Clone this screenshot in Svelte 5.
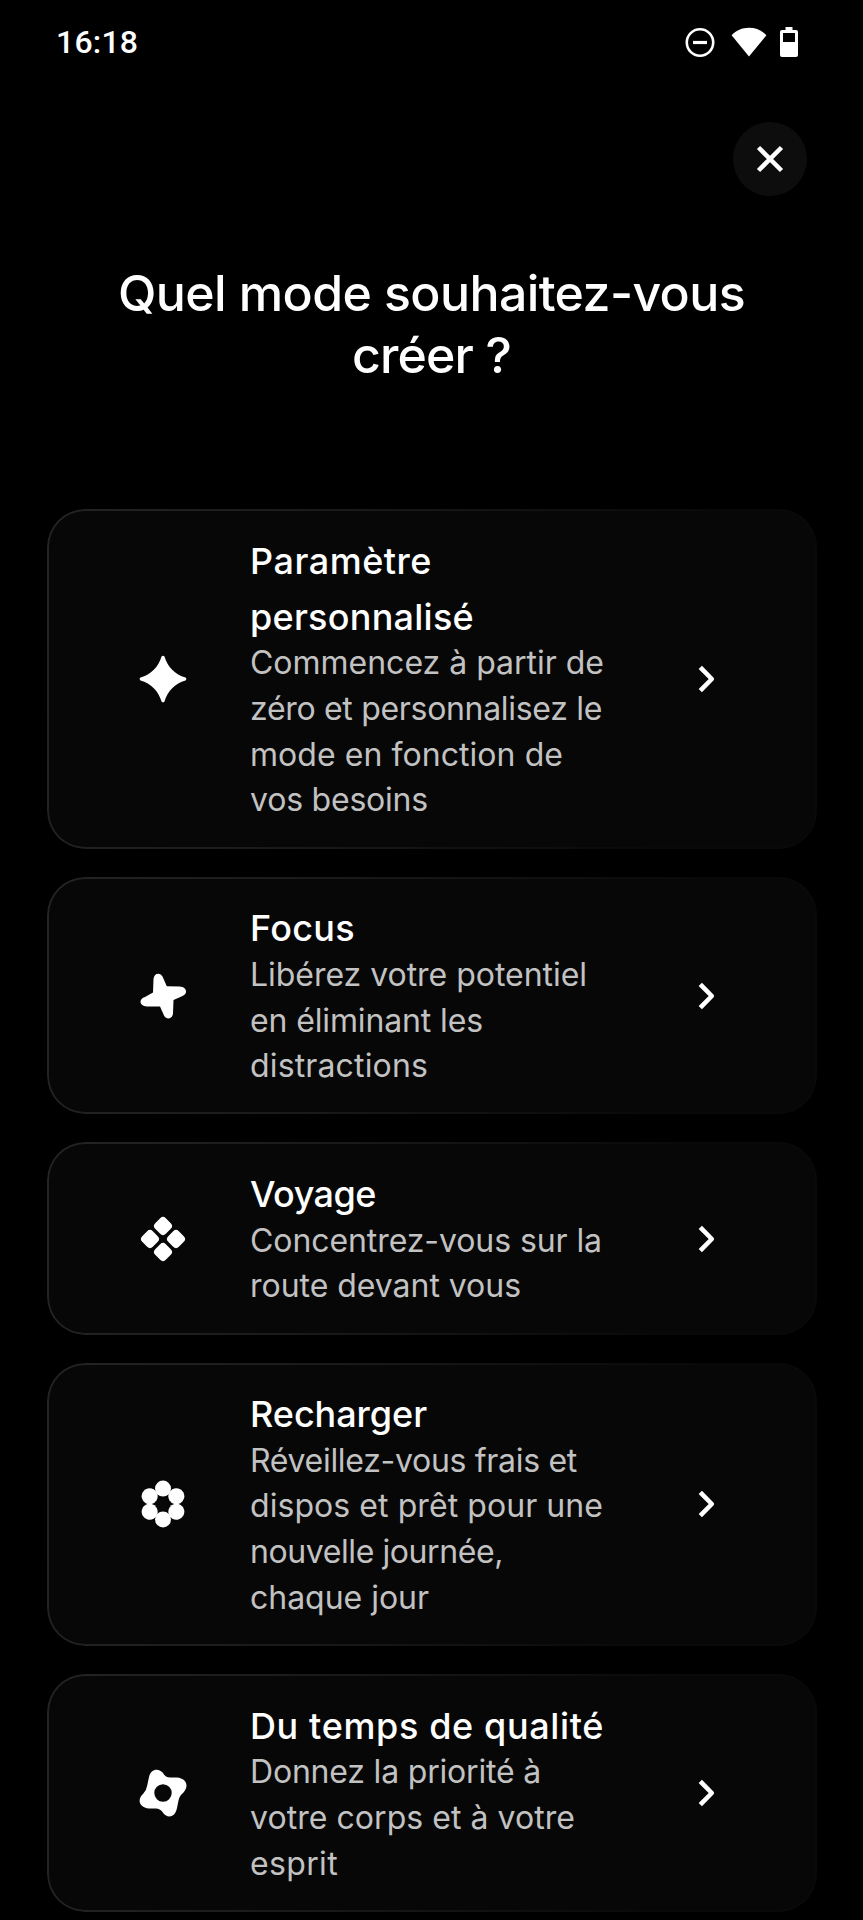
<script lang="ts">
  type Line = { text: string; width: number };
  type Mode = { icon: string; title: Line[]; description: Line[] };

  const heading: Line[] = [
    { text: 'Quel mode souhaitez-vous', width: 627 },
    { text: 'créer ?', width: 159 },
  ];

  const modes: Mode[] = [
    {
      icon: 'sparkle',
      title: [
        { text: 'Paramètre', width: 182 },
        { text: 'personnalisé', width: 224 },
      ],
      description: [
        { text: 'Commencez à partir de', width: 354 },
        { text: 'zéro et personnalisez le', width: 352 },
        { text: 'mode en fonction de', width: 313 },
        { text: 'vos besoins', width: 178 },
      ],
    },
    {
      icon: 'star',
      title: [{ text: 'Focus', width: 105 }],
      description: [
        { text: 'Libérez votre potentiel', width: 337 },
        { text: 'en éliminant les', width: 233 },
        { text: 'distractions', width: 178 },
      ],
    },
    {
      icon: 'diamonds',
      title: [{ text: 'Voyage', width: 126 }],
      description: [
        { text: 'Concentrez-vous sur la', width: 352 },
        { text: 'route devant vous', width: 271 },
      ],
    },
    {
      icon: 'flower',
      title: [{ text: 'Recharger', width: 177 }],
      description: [
        { text: 'Réveillez-vous frais et', width: 327 },
        { text: 'dispos et prêt pour une', width: 353 },
        { text: 'nouvelle journée,', width: 253 },
        { text: 'chaque jour', width: 179 },
      ],
    },
    {
      icon: 'ring',
      title: [{ text: 'Du temps de qualité', width: 354 }],
      description: [
        { text: 'Donnez la priorité à', width: 291 },
        { text: 'votre corps et à votre', width: 325 },
        { text: 'esprit', width: 88 },
      ],
    },
  ];

  // Tracks a line of text so that it fills its width
  function fit(node: HTMLElement, width: number) {
    const natural = node.getBoundingClientRect().width;
    const count = node.textContent?.length ?? 1;
    node.style.letterSpacing = `${(width - natural) / count}px`;
  }
</script>

<div class="screen">
  <header class="status-bar">
    <span class="clock">16:18</span>
    <div class="status-icons">
      <svg width="30" height="30" viewBox="0 0 30 30">
        <circle cx="15" cy="15.500" r="13.2" fill="none" stroke="#fff" stroke-width="2.6" />
        <path d="M8 15.500h14" stroke="#fff" stroke-width="3.2" />
      </svg>
      <svg class="wifi" width="36" height="30" viewBox="0 0 36 30">
        <path d="M.6 8.3C5.200 3.500 11 .8 18 .8s12.800 2.700 17.400 7.500L18 29.500z" fill="#fff" />
      </svg>
      <svg class="battery" width="18" height="30" viewBox="0 0 18 30">
        <path
          d="M5.500 0h7v3H16a2 2 0 0 1 2 2v23a2 2 0 0 1-2 2H2a2 2 0 0 1-2-2V5a2 2 0 0 1 2-2h3.500zM3 6v9h12V6z"
          fill="#fff"
          fill-rule="evenodd"
        />
      </svg>
    </div>
  </header>

  <div class="toolbar">
    <button class="close" aria-label="Fermer">
      <svg width="28" height="28" viewBox="0 0 28 28">
        <path d="M2.500 2.500l23 23M25.500 2.500l-23 23" stroke="#fff" stroke-width="4.500" />
      </svg>
    </button>
  </div>

  <h1>
    {#each heading as line}
      <span class="line"><span class="fit" use:fit={line.width}>{line.text}</span></span>
    {/each}
  </h1>

  <main class="modes">
    {#each modes as mode}
      <button class="card">
        <svg class="icon" width="48" height="48" viewBox="-24 -24 48 48" fill="#fff">
          {#if mode.icon === 'sparkle'}
            <path d="M-1.500-22.500Q0-24.200 1.500-22.500C4.500-12 12-4.500 22.500-1.500Q24.200 0 22.500 1.500C12 4.500 4.500 12 1.500 22.500Q0 24.200-1.500 22.500C-4.500 12-12 4.500-22.500 1.500Q-24.200 0-22.500-1.500C-12-4.500-4.500-12-1.500-22.500z" />
          {:else if mode.icon === 'star'}
            <path d="M-9.500-17C-9-23.500-2.500-23.800-.5-19.500L3.800-9.800L16.500-9.500C24.500-9 25-1.500 19 .2L10.500 4L10 17.500C9.500 23.500 3 24 1 19.500L-3 10.500L-16 10.500C-24 10-24.500 3-18 1L-10-3.500z" />
          {:else if mode.icon === 'diamonds'}
            <g transform="rotate(45)">
              <rect x="-16.700" y="-16.700" width="15" height="15" rx="4" />
              <rect x="1.700" y="-16.700" width="15" height="15" rx="4" />
              <rect x="-16.700" y="1.700" width="15" height="15" rx="4" />
              <rect x="1.700" y="1.700" width="15" height="15" rx="4" />
            </g>
          {:else if mode.icon === 'flower'}
            {#each [0, 60, 120, 180, 240, 300] as angle}
              <circle cx="0" cy="-15.400" r="8" transform="rotate({angle})" />
            {/each}
          {:else}
            <path
              fill-rule="evenodd"
              d="M-14-16C-12-24.500-3.500-25.500 1-18.500Q3-15.500 7-15.500L14-15.500C24-14.500 26-6.500 20.500-.5Q16.500 2.500 15.500 7.500L14 15C12 25.500 3.500 25.500-.5 19Q-3 15.500-7 15.500L-14 15.500C-24 14.500-26 6.500-20 1Q-16.500-2.500-15.800-7.500zM8.700 0A8.700 8.700 0 1 0-8.700 0A8.700 8.700 0 1 0 8.700 0z"
            />
          {/if}
        </svg>
        <div class="text">
          <div class="title">
            {#each mode.title as line}
              <span class="line"><span class="fit" use:fit={line.width}>{line.text}</span></span>
            {/each}
          </div>
          <div class="description">
            {#each mode.description as line}
              <span class="line"><span class="fit" use:fit={line.width}>{line.text}</span></span>
            {/each}
          </div>
        </div>
        <svg class="chevron" width="18" height="28" viewBox="0 0 18 28">
          <path d="M2.300 2.300L13.800 14L2.300 25.700" fill="none" stroke="#fff" stroke-width="4.600" stroke-linejoin="round" />
        </svg>
      </button>
    {/each}
  </main>
</div>

<style>
  :global(body) { background: #000; }
  .screen { width: 863px; height: 1920px; overflow: hidden; background: #000; color: #fff; font-family: Inter, "Liberation Sans", sans-serif; }
  .status-bar { display: flex; justify-content: space-between; align-items: center; box-sizing: border-box; height: 84px; padding: 0 65px 0 56px; }
  .clock { font: 500 32px/38px Roboto, sans-serif; letter-spacing: 0.2px; }
  .status-icons { display: flex; align-items: center; }
  .wifi { margin-left: 16px; }
  .battery { margin-left: 13px; }
  .toolbar { display: flex; justify-content: flex-end; padding: 38px 56px 0 0; }
  .close { display: flex; align-items: center; justify-content: center; width: 74px; height: 74px; padding: 0; border: none; border-radius: 50%; background: #0d0d0d; }
  h1 { margin: 66px 0 0; font-size: 50px; font-weight: 500; line-height: 62px; text-align: center; }
  .line { display: block; white-space: nowrap; }
  .fit { display: inline-block; }
  .modes { display: flex; flex-direction: column; gap: 28px; margin: 123.200px 46.500px 0 46.500px; }
  .card { position: relative; flex: none; display: flex; align-items: center; padding: 23.700px 101px 21px 92px; border: none; border-radius: 38px; background: #070707; color: inherit; font: inherit; text-align: left; }
  /* hairline that fades out towards the right edge */
  .card::before { content: ""; position: absolute; inset: 0; padding: 2px; border-radius: inherit; background: linear-gradient(100deg, #242424, #1a1a1a 35%, #090909 80%); mask: linear-gradient(#000 0 0) content-box exclude, linear-gradient(#000 0 0); pointer-events: none; }
  .icon, .chevron { flex: none; position: relative; top: -1.300px; }
  .text { flex: 1; margin-left: 63.500px; }
  .title { font-size: 36px; font-weight: 500; line-height: 56px; }
  .description { margin: -4.500px 0 4.500px; color: #c2c2c2; font-size: 32px; font-weight: 400; line-height: 45.700px; }
</style>
